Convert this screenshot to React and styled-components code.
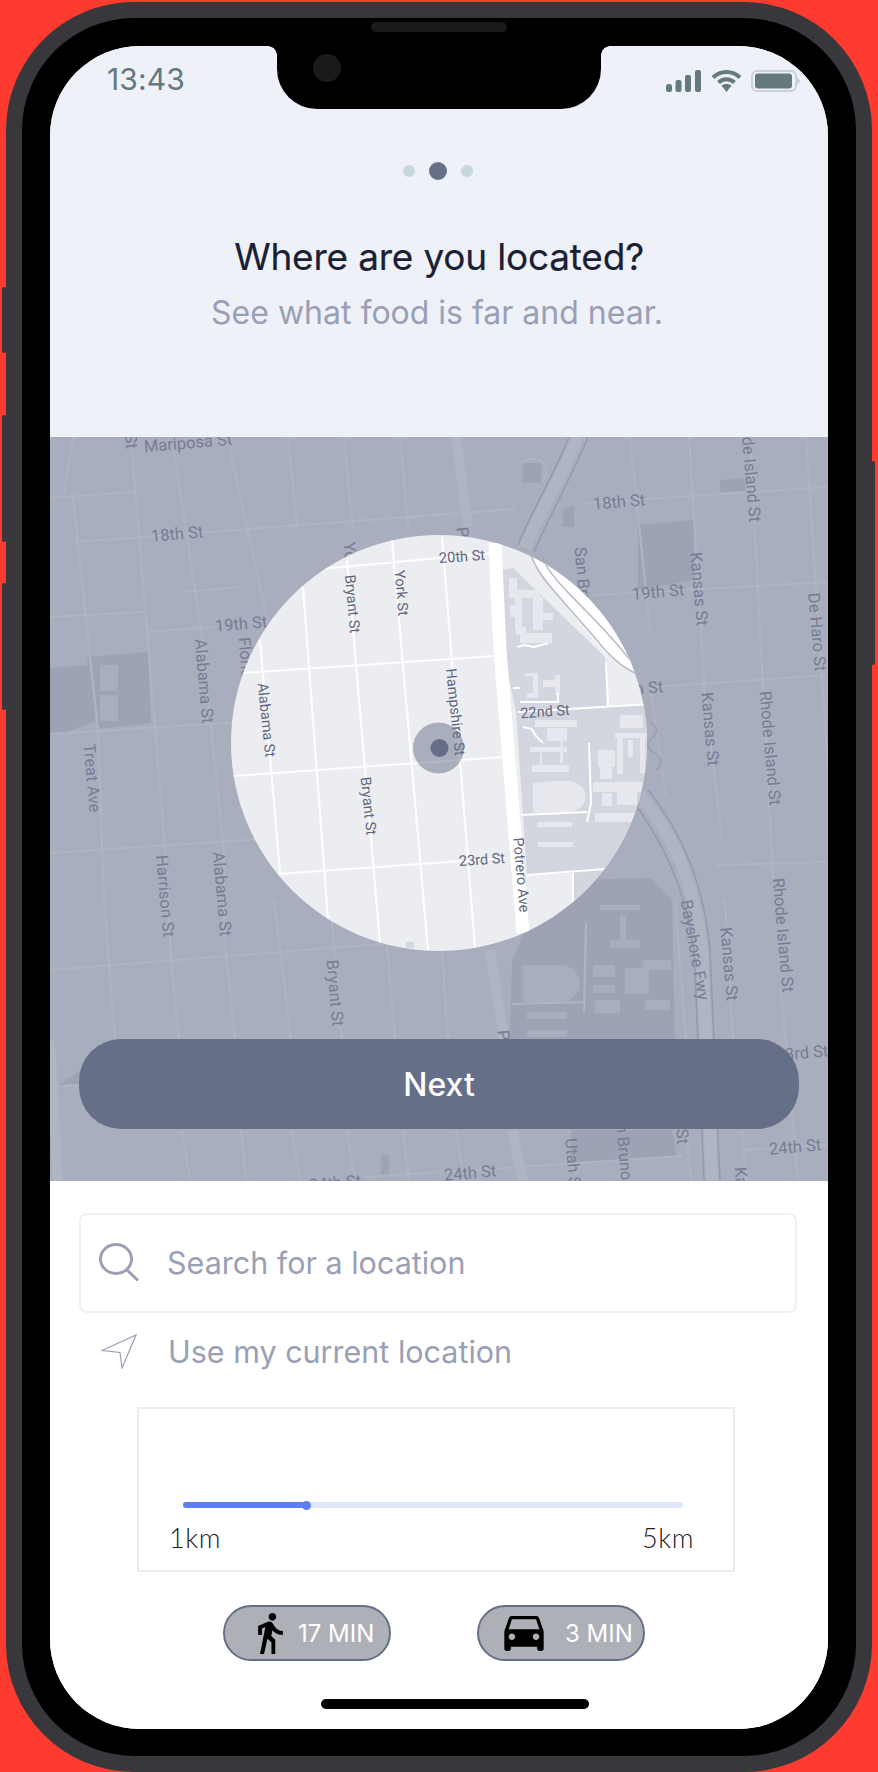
import React from "react";
import styled, { createGlobalStyle } from "styled-components";

const Global = createGlobalStyle`
  html, body { margin: 0; padding: 0; background: #ff3b30; }
  body { width: 878px; height: 1772px; overflow: hidden; font-family: Inter, "Noto Sans", sans-serif; }
  #root { width: 878px; height: 1772px; }
`;

const Page = styled.div`
  width: 878px;
  height: 1772px;
  padding: 2px 6px 0;
  box-sizing: border-box;
  background: #ff3b30;
`;

const Frame = styled.div`
  position: relative;
  width: 866px;
  height: 1770px;
  padding: 16px;
  box-sizing: border-box;
  background: #38373c;
  border-radius: 128px;
`;

const SideButton = styled.span`
  position: absolute;
  top: ${(p) => p.$top}px;
  height: ${(p) => p.$height}px;
  ${(p) => (p.$right ? "right: -3px;" : "left: -4px;")}
  width: 4px;
  background: #38373c;
  border-radius: 2px;
`;

const Bezel = styled.div`
  position: relative;
  height: 1738px;
  padding: 28px 28px 27px;
  box-sizing: border-box;
  background: #000;
  border-radius: 112px;
`;

const Speaker = styled.span`
  position: absolute;
  left: 349px;
  top: 4px;
  width: 136px;
  height: 10px;
  background: #1a1a1a;
  border-radius: 5px;
`;

const Screen = styled.div`
  position: relative;
  width: 778px;
  height: 1683px;
  display: flex;
  flex-direction: column;
  background: #fff;
  border-radius: 90px;
  overflow: hidden;
`;

const Notch = styled.div`
  position: absolute;
  left: 227px;
  top: 0;
  width: 324px;
  height: 63px;
  background: #000;
  border-radius: 0 0 40px 40px;
  &::before, &::after {
    content: "";
    position: absolute;
    top: 0;
    width: 9px;
    height: 9px;
  }
  &::before { left: -9px; background: radial-gradient(circle at 0 100%, transparent 8.5px, #000 9px); }
  &::after { right: -9px; background: radial-gradient(circle at 100% 100%, transparent 8.5px, #000 9px); }
`;

const Camera = styled.span`
  position: absolute;
  left: 36px;
  top: 8px;
  width: 28px;
  height: 28px;
  background: #1a1a1a;
  border-radius: 50%;
`;

const Top = styled.header`
  flex: 0 0 391px;
  display: flex;
  flex-direction: column;
  align-items: center;
  background: #eef1f8;
`;

const StatusBar = styled.div`
  align-self: stretch;
  height: 48px;
  padding: 22px 28px 0 57px;
  box-sizing: border-box;
  display: flex;
  justify-content: space-between;
  align-items: flex-start;
`;

const Time = styled.span`
  font-size: 30px;
  line-height: 22px;
  color: #64787d;
  letter-spacing: 0.1px;
`;

const StatusIcons = styled.div`
  display: flex;
  align-items: center;
  gap: 9.5px;
  margin-top: 1px;
`;

const Dots = styled.div`
  margin: 68px 2px 0 0;
  height: 18px;
  display: flex;
  align-items: center;
  gap: 14px;
`;

const Dot = styled.span`
  width: ${(p) => (p.$active ? 18 : 12)}px;
  height: ${(p) => (p.$active ? 18 : 12)}px;
  border-radius: 50%;
  background: ${(p) => (p.$active ? "#667089" : "#c7d8da")};
`;

const Title = styled.h1`
  margin: 55px 0 0;
  font-size: 37px;
  line-height: 44px;
  font-weight: 400;
  letter-spacing: -0.2px;
  color: #1b1f34;
  -webkit-text-stroke: 0.2px #1b1f34;
`;

const Subtitle = styled.p`
  margin: 12px 4px 0 0;
  font-size: 32px;
  line-height: 44px;
  font-weight: 400;
  color: #9a9fb5;
`;

const MapArea = styled.section`
  position: relative;
  flex: 0 0 744px;
  display: flex;
  align-items: flex-end;
  padding: 0 29px 52px;
  box-sizing: border-box;
  background: #a8aebd;
  overflow: hidden;
`;

const MapSvg = styled.svg`
  position: absolute;
  inset: 0;
  display: block;
`;

const Road = styled.path`
  fill: none;
  stroke: ${(p) => (p.$light ? "#ffffff" : "#b0b5c3")};
  stroke-width: ${(p) => p.$w || 2}px;
`;

const HighwayLine = styled.path`
  fill: none;
  stroke: ${(p) => (p.$light ? "#b4b9c6" : "#949aae")};
  stroke-width: 1.5px;
`;

const Label = styled.text`
  font-family: Roboto, "Liberation Sans", sans-serif;
  font-size: ${(p) => (p.$light ? 14.5 : 16.5)}px;
  fill: ${(p) => (p.$light ? "#5e6680" : "#767d94")};
  text-anchor: ${(p) => p.$anchor || "middle"};
  dominant-baseline: central;
`;

const NextButton = styled.button`
  position: relative;
  flex: 1;
  height: 90px;
  border: 0;
  border-radius: 42px;
  background: #666f88;
  color: #fff;
  font-family: Inter, sans-serif;
  font-size: 32px;
  font-weight: 450;
`;

const Sheet = styled.section`
  position: relative;
  flex: 1;
  padding: 32px 31px 0 29px;
  box-sizing: border-box;
  display: flex;
  flex-direction: column;
  background: #fff;
  border-radius: 8px 8px 0 0;
`;

const SearchField = styled.div`
  height: 100px;
  padding: 0 0 2px 18px;
  box-sizing: border-box;
  display: flex;
  align-items: center;
  gap: 28px;
  border: 2px solid #f0f1f7;
  border-radius: 8px;
`;

const FieldText = styled.span`
  font-size: 30.5px;
  color: #9a9fb5;
`;

const LocationRow = styled.div`
  height: 76px;
  margin-bottom: 2px;
  padding-left: 22px;
  display: flex;
  align-items: center;
  gap: 31px;
`;

const SliderBox = styled.div`
  width: 598px;
  height: 165px;
  margin: 16px 0 0 58px;
  padding: 93px 39px 0 30px;
  box-sizing: border-box;
  border: 2px solid #ececec;
`;

const Track = styled.div`
  position: relative;
  width: 500px;
  margin-left: 14px;
  height: 6px;
  border-radius: 3px;
  background: #e0e7fb;
`;

const TrackFill = styled.div`
  height: 100%;
  border-radius: 3px;
  background: #5b7ff5;
`;

const Thumb = styled.span`
  position: absolute;
  top: -1.5px;
  width: 9px;
  height: 9px;
  margin-left: -5px;
  border-radius: 50%;
  background: #5b7ff5;
`;

const Scale = styled.div`
  display: flex;
  justify-content: space-between;
  margin-top: 14px;
  font-family: Lato, "Open Sans", sans-serif;
  font-weight: 300;
  font-size: 27px;
  line-height: 32px;
  letter-spacing: 0.6px;
  color: #222;
`;

const Pills = styled.div`
  display: flex;
  gap: 86px;
  margin: 33px 0 0 144px;
`;

const Pill = styled.div`
  width: 168px;
  height: 56px;
  box-sizing: border-box;
  display: flex;
  align-items: center;
  gap: ${(p) => p.$gap}px;
  padding-left: ${(p) => p.$pad}px;
  background: #aeb0b8;
  border: 2px solid #666f88;
  border-radius: 28px;
  color: #fff;
  font-size: 24px;
  white-space: nowrap;
`;

const HomeBar = styled.span`
  position: absolute;
  left: 271px;
  bottom: 20px;
  width: 268px;
  height: 10px;
  background: #000;
  border-radius: 5px;
`;

const hRoads = [
  [50,498,134,492],[76,542,515,509],[50,617,143,612],[185,592,241,587],[146,632,215,627],[50,734,241,722],
  [582,503,828,487],[593,595,828,582],[655,687,828,675],[50,853,280,838],[50,970,392,943],[717,865,828,862],
  [50,1087,80,1085],[364,1177,520,1167],[520,1167,683,1156],[742,1150,828,1145],
];
const vRoads = [
  [73,498,98,730],[104,900,115,1040],[132,450,165,847],[171,960,179,1040],[182,1130,190,1181],[174,450,201,630],
  [230,450,268,623],[201,630,224,853],[224,933,235,1040],[241,1130,246,1181],[288,437,297,527],[344,437,353,530],
  [400,437,408,527],[274,900,291,1040],[291,1130,300,1181],[330,900,342,1040],[347,1130,355,1181],[386,933,395,1040],
  [403,1130,409,1181],[442,950,448,1040],[456,1130,462,1167],[630,437,650,630],[650,687,666,797],[689,437,705,697],
  [705,697,722,840],[750,437,773,880],[781,990,798,1181],[806,437,828,770],[725,900,733,1040],[742,1130,746,1181],
  [675,900,686,1040],[686,1130,691,1181],[98,730,104,900],[165,847,171,960],[224,853,224,933],[73,437,64,493],
];
const wideRoads = [[456,437,468,527],[490,950,504,1040],[512,1130,523,1181],[50,1040,58,1181]];
const dimBlocks = [
  "638,525 694,520 694,580 638,590","523,463 541,463 541,483 523,483","720,480 745,478 745,491 720,492",
  "563,510 574,505 574,527 563,527","87,657 148,652 151,723 98,729","50,668 92,665 95,722 67,732 50,733",
  "512,960 530,920 570,880 650,878 672,900 675,1040 510,1040","381,1155 389,1155 389,1177 381,1177",
  "571,1130 672,1130 677,1157 571,1163","59,1085 95,1060 95,1083",
];
const dimBuildings = [
  [593,965,22,12],[593,985,22,8],[595,1000,25,13],[610,940,30,8],[620,915,6,30],[643,960,28,10],[645,1000,25,10],
  [527,1012,40,7],[527,1030,40,7],[625,968,24,26],[600,905,40,5],[100,665,18,26],[100,695,18,26],
];
const dimLabels = [
  ["Mariposa St",188,443,-5],["St",131,441,85],["18th St",177,534,-5],["18th St",619,502,-5],["19th St",241,624,-5],
  ["19th St",658,592,-5],["20th St",637,689,-5],["Alabama St",204,681,85],["Florida St",247,672,85],["Treat Ave",92,778,85],
  ["Harrison St",165,896,85],["Alabama St",222,894,85],["Bryant St",335,993,85],["Kansas St",699,589,85],
  ["Kansas St",710,729,85],["Kansas St",729,964,85],["De Haro St",817,632,85],["Rhode Island St",770,748,85],
  ["Rhode Island St",783,935,85],["Bayshore Fwy",695,950,80],["24th St",795,1147,-5],["24th St",470,1173,-5],
  ["24th St",335,1183,-5],["Utah St",573,1165,85],["23rd St",802,1053,-5],
];
const dimStartLabels = [
  ["San Bruno Ave",580,547,85],["Potrero Ave",462,527,85],["York St",349,542,85],["Potrero Ave",503,1030,85],
  ["San Bruno Ave",620,1105,85],["Kansas St",740,1167,85],
];
const lightRoads = [
  [300,571,492,553],[242,673,495,656],[518,712,650,704],[233,776,503,757],[278,874,505,858],[527,875,605,869],
  [303,587,328,920],[260,640,280,873],[347,560,380,943],[392,540,428,950],[442,537,475,947],[606,663,608,707],[573,873,573,905],
];
const campusBuildings = [
  [509,578,8,20],[517,590,23,8],[510,605,8,12],[515,597,7,33],[533,597,10,33],[543,613,10,7],[520,633,32,10],[516,627,10,8],
  [525,673,13,3],[533,673,5,25],[527,693,10,5],[543,680,15,7],[555,675,5,20],
  [535,720,42,7],[547,728,20,13],[530,747,37,5],[560,740,3,23],[532,765,37,7],[540,753,2,13],
  [537,822,35,5],[538,842,35,5],[620,715,23,13],[617,737,6,37],[615,733,32,5],[628,740,5,17],[598,750,17,17],
  [600,767,12,12],[593,782,50,10],[602,793,10,13],[617,792,20,13],[595,813,40,9],[640,737,5,36],
];
const lightLabels = [
  ["20th St",462,557,-4],["Bryant St",352,604,85],["York St",401,593,85],["Hampshire St",455,712,84],
  ["Alabama St",266,720,84],["Bryant St",368,806,84],["22nd St",545,712,-4],["23rd St",482,860,-4],["Potrero Ave",521,875,85],
];

const seg = ([a, b, c, d]) => `M${a} ${b}L${c} ${d}`;

function MapText({ item, light, anchor }) {
  const [text, x, y, r] = item;
  return (
    <Label x={x} y={y} transform={`rotate(${r} ${x} ${y})`} $light={light} $anchor={anchor}>
      {text}
    </Label>
  );
}

function CityMap() {
  return (
    <MapSvg width="778" height="744" viewBox="50 437 778 744">
      <defs>
        <clipPath id="lens">
          <circle cx="439" cy="743" r="208" />
        </clipPath>
      </defs>
      {dimBlocks.map((p) => <polygon key={p} points={p} fill="#9da3b4" />)}
      {dimBuildings.map(([x, y, w, h]) => <rect key={`${x}-${y}`} x={x} y={y} width={w} height={h} fill="#a8aebd" />)}
      <path d="M523 965h38a18 18 0 0 1 0 37h-38z" fill="#a8aebd" />
      <Road d="M512 1004L585 1002M586 923L584 1012" />
      {hRoads.map((r) => <Road key={r.join()} d={seg(r)} />)}
      {vRoads.map((r) => <Road key={r.join()} d={seg(r)} />)}
      {wideRoads.map((r) => <Road key={r.join()} d={seg(r)} $w={10} />)}
      <Road d="M578 437C560 480 540 510 525 548" $w={12} />
      <HighwayLine d="M569 437C552 480 532 510 518 545M588 437C570 480 550 515 534 552" />
      <Road d="M640 795C670 830 694 880 702 950L712 1181" $w={12} />
      <HighwayLine d="M632 800C658 835 684 880 694 950L704 1181M648 790C680 830 704 880 710 950L720 1181" />
      <path d="M523 463a10 10 0 0 1 20 18" fill="none" stroke="#b0b5c3" strokeWidth="2" />
      <path d="M650 722q12 8 2 16t4 16q10 8 0 16" fill="none" stroke="#9ba1b2" strokeWidth="2" />
      {dimLabels.map((l) => <MapText key={l.join()} item={l} />)}
      {dimStartLabels.map((l) => <MapText key={l.join()} item={l} anchor="start" />)}
      <MapText item={["Rhode Island St", 755, 522, 85]} anchor="end" />
      <MapText item={["Vermont St", 683, 1144, 85]} anchor="end" />

      <g clipPath="url(#lens)">
        <rect x="231" y="535" width="416" height="416" fill="#ecedf1" />
        <polygon points="502,570 513,568 605,657 608,706 650,704 650,800 620,900 573,905 573,873 527,875 516,712 505,660" fill="#d3d6de" />
        <polygon points="532,557 565,545 670,640 640,680 635,673 605,653 547,583" fill="#fff" />
        <HighwayLine $light d="M531 555C540 580 555 590 605 650C620 665 625 668 635 673M546 565C560 590 600 620 630 660M575 580C600 605 615 625 640 650" />
        {lightRoads.map((r) => <Road key={r.join()} d={seg(r)} $light />)}
        <Road d="M495 543L500 650L523 933" $w={13} $light />
        {campusBuildings.map(([x, y, w, h]) => <rect key={`${x}-${y}`} x={x} y={y} width={w} height={h} fill="#e6e8ee" />)}
        <path d="M533 783l22 -2h13a17 15 0 0 1 0 31l-35 1z" fill="#e6e8ee" />
        <Road d="M517 647L524 645L534 647L548 643M523 727L532 729L535 735L543 743M520 702L558 702L558 693M513 688L520 688" $light />
        <Road d="M521 815L587 812M589 743L591 803L587 822" $light />
        <rect x="406" y="942" width="8" height="6" fill="#d3d6de" />
        {lightLabels.map((l) => <MapText key={l.join()} item={l} light />)}
      </g>
      <circle cx="438.5" cy="748" r="25.5" fill="#666f88" opacity="0.5" />
      <circle cx="439.5" cy="748" r="9" fill="#666f88" />
    </MapSvg>
  );
}

const SignalIcon = () => (
  <svg width="35" height="22" viewBox="0 0 35 22" fill="#667a7e">
    <rect x="0" y="14" width="6" height="8" rx="2.5" />
    <rect x="9.5" y="10" width="6" height="12" rx="2" />
    <rect x="19" y="5" width="6" height="17" rx="2" />
    <rect x="29" y="0" width="6" height="22" rx="2" />
  </svg>
);

const WifiIcon = () => (
  <svg width="31" height="23" viewBox="0 0 31 23" fill="none" stroke="#667a7e" strokeWidth="4">
    <path d="M2 8.5C9.5 1 21.5 1 29 8.5" />
    <path d="M7.5 13.5C12 9 19 9 23.5 13.5" />
    <path d="M10.5 16.5L15.5 23L20.5 16.5C17.5 14.5 13.5 14.5 10.5 16.5Z" fill="#667a7e" stroke="none" />
  </svg>
);

const BatteryIcon = () => (
  <svg width="49" height="22" viewBox="0 0 49 22">
    <rect x="1" y="1" width="44" height="20" rx="5" fill="none" stroke="#c7d3d8" strokeWidth="2" />
    <rect x="4" y="3.5" width="37" height="15" rx="3" fill="#667a7e" />
    <path d="M46 7.5C48 8.5 49 10 49 11C49 12 48 13.5 46 14.5Z" fill="#c7d3d8" />
  </svg>
);

const SearchIcon = () => (
  <svg width="40" height="38" viewBox="0 0 40 38" fill="none" stroke="#9a9fb5" strokeWidth="3">
    <ellipse cx="17" cy="16" rx="15.5" ry="14.5" />
    <path d="M28 27L39 37.5" />
  </svg>
);

const NavIcon = () => (
  <svg width="36" height="35" viewBox="0 0 36 35" fill="none" stroke="#9a9fb5" strokeWidth="1.2">
    <path d="M1 16.5L35 1L21 34L19 18.5Z" />
  </svg>
);

const WalkIcon = () => (
  <svg width="25" height="41" viewBox="6 1.5 13 21.5" fill="#000">
    <path d="M13.5 5.5c1.1 0 2-.9 2-2s-.9-2-2-2-2 .9-2 2 .9 2 2 2zM9.8 8.9L7 23h2.1l1.8-8 2.1 2v6h2v-7.5l-2.1-2 .6-3C14.8 12 16.8 13 19 13v-2c-1.9 0-3.5-1-4.3-2.4l-1-1.6c-.4-.6-1-1-1.7-1-.3 0-.5.1-.8.1L6 8.3V13h2V9.6l1.8-.7" />
  </svg>
);

const CarIcon = () => (
  <svg width="40" height="35" viewBox="3 5 18 16" fill="#000">
    <path d="M18.92 6.01C18.72 5.42 18.16 5 17.5 5h-11c-.66 0-1.21.42-1.42 1.01L3 12v8c0 .55.45 1 1 1h1c.55 0 1-.45 1-1v-1h12v1c0 .55.45 1 1 1h1c.55 0 1-.45 1-1v-8l-2.08-5.99zM6.5 16c-.83 0-1.5-.67-1.5-1.5S5.67 13 6.5 13s1.5.67 1.5 1.5S7.33 16 6.5 16zm11 0c-.83 0-1.5-.67-1.5-1.5s.67-1.5 1.5-1.5 1.5.67 1.5 1.5-.67 1.5-1.5 1.5zM5 11l1.5-4.5h11L19 11H5z" />
  </svg>
);

export default function App() {
  const progress = 24.8;
  return (
    <Page>
      <Global />
      <Frame>
        <SideButton $top={285} $height={66} />
        <SideButton $top={413} $height={127} />
        <SideButton $top={581} $height={127} />
        <SideButton $right $top={459} $height={204} />
        <Bezel>
          <Speaker />
          <Screen>
            <Top>
              <StatusBar>
                <Time>13:43</Time>
                <StatusIcons>
                  <SignalIcon />
                  <WifiIcon />
                  <BatteryIcon />
                </StatusIcons>
              </StatusBar>
              <Dots>
                <Dot />
                <Dot $active />
                <Dot />
              </Dots>
              <Title>Where are you located?</Title>
              <Subtitle>See what food is far and near.</Subtitle>
            </Top>
            <MapArea>
              <CityMap />
              <NextButton>Next</NextButton>
            </MapArea>
            <Sheet>
              <SearchField>
                <SearchIcon />
                <FieldText>Search for a location</FieldText>
              </SearchField>
              <LocationRow>
                <NavIcon />
                <FieldText>Use my current location</FieldText>
              </LocationRow>
              <SliderBox>
                <Track>
                  <TrackFill style={{ width: `${progress}%` }} />
                  <Thumb style={{ left: `${progress}%` }} />
                </Track>
                <Scale>
                  <span>1km</span>
                  <span>5km</span>
                </Scale>
              </SliderBox>
              <Pills>
                <Pill $pad={33} $gap={15}>
                  <WalkIcon />
                  17 MIN
                </Pill>
                <Pill $pad={25} $gap={21}>
                  <CarIcon />
                  3 MIN
                </Pill>
              </Pills>
              <HomeBar />
            </Sheet>
            <Notch>
              <Camera />
            </Notch>
          </Screen>
        </Bezel>
      </Frame>
    </Page>
  );
}
